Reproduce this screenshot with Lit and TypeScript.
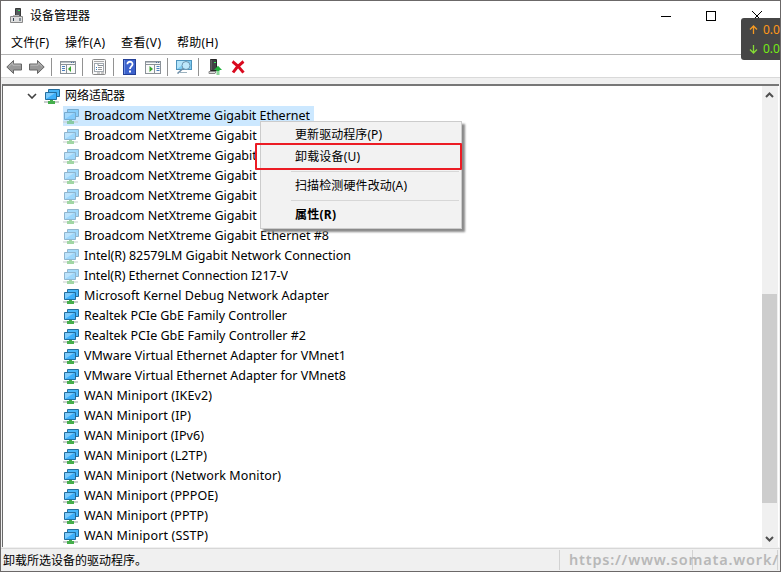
import { LitElement, html, css, svg } from "lit";
import { customElement, property } from "lit/decorators.js";
import { classMap } from "lit/directives/class-map.js";

const panelDots = (x: number) => svg`
  <path d="M${x} 7.5h3M${x} 9.5h3M${x} 11.5h3" stroke="#4a7ebd"/>`;

const consoleFrame = svg`
  <rect x=".5" y="2.5" width="15" height="12" fill="#fafafa" stroke="#8b9299"/>
  <path d="M1 3.5h14" stroke="#b8bfc6"/><path d="M1 5.500h14" stroke="#8b9299"/>
  <path d="M11 3.5h1M13 3.5h1" stroke="#4a6f9c"/>`;

const icons: Record<string, unknown> = {
  back: svg`<path d="M.8 8 7.5 1.500V5H15.500V11H7.500V14.500Z" fill="#999" stroke="#666"/><path d="M3 7.300 6.800 3.800V6.200H14.500" fill="none" stroke="#bbb"/>`,
  forward: svg`<path d="M15.200 8 8.500 1.500V5H.500V11H8.500V14.500Z" fill="#999" stroke="#666"/><path d="M1.500 6.200H9.200V3.800L13 7.300" fill="none" stroke="#bbb"/>`,
  tree: svg`${consoleFrame}${panelDots(2)}<path d="M6.500 6v8" stroke="#8b9299"/><path d="M11 7v6L8 10Z" fill="#38a52c"/>`,
  properties: svg`<rect x="1.5" y=".5" width="13" height="15" rx="1" fill="#f8f8f8" stroke="#888"/><path d="M3 2.5h10" stroke="#aaa"/><rect x="3.5" y="4.5" width="9" height="8" fill="#fff" stroke="#a2a9b0"/><path d="M7 5v1.5h5" fill="none" stroke="#8b9299"/><path d="M5 8.5h1M5 10.5h1" stroke="#347ac0"/><path d="M7 8.5h4M7 10.5h4" stroke="#999"/><path d="M6 14h3M10 14h3" stroke="#999"/>`,
  help: svg`<rect x="1.5" y=".5" width="12" height="15" fill="#3c62cc" stroke="#233f96"/><path d="M2.5 1v14" stroke="#6f92e6"/><path d="M5.4 5.2C5.4 1.8 10.7 2 10.5 5.3C10.3 7.3 8 7.5 8 10" fill="none" stroke="#fff" stroke-width="1.8"/><rect x="7" y="11.5" width="2" height="2" fill="#fff"/>`,
  action: svg`${consoleFrame}${panelDots(11.5)}<path d="M9.500 6v8" stroke="#8b9299"/><path d="M4.500 7v6L8 10Z" fill="#38a52c"/>`,
  scan: svg`<rect x=".5" y="1.500" width="15" height="9" fill="#7fcdf3" stroke="#4e94bd"/><path d="M1 10V2h11Z" fill="#b4e5fb"/><path d="M4 13.500h7" stroke="#9cb2bf"/><circle cx="10" cy="6.500" r="4" fill="#c7ecfd" fill-opacity=".85" stroke="#6c95af"/><path d="m7 9.500-5.500 5" stroke="#6c8da7" stroke-width="1.6"/>`,
  update: svg`<path d="M3.500.500h6v11h-6Z" fill="#3f4244" stroke="#252525"/><path d="M4 1v10" stroke="#777"/><path d="M7 3.500h2" stroke="#36ee58"/><path d="M2 12.500h7l-1 2H2Z" fill="#ddd" stroke="#888"/><path d="M11 6.800 15 11h-2.500v1h-3v-1H7Z" fill="#21b23c"/><path d="M9.500 13h3M9.500 15h3" stroke="#21b23c"/>`,
  remove: svg`<path d="M2.500 2.500C6 5 10.500 9.500 13.500 13.700M13.500 2.500C9.500 5.500 6 9 3 13.500" fill="none" stroke="#d9091e" stroke-width="2.9"/>`,
  computer: svg`<path d="M6.500.500h5v8h-5Z" fill="#555b5e" stroke="#393939"/><path d="M9 2.500h2" stroke="#32e456"/><path d="M1.500 8.500h12v6h-12Z" fill="#ddd" stroke="#898989"/><path d="M4 10h1v3H4ZM10.500 10h1v3h-1Z" fill="#345"/><path d="M4 7.500h6" stroke="#bbb"/>`,
  network: svg`<path d="M0 14h15" stroke="#c9cdce" stroke-width="2"/><path d="M6 12h3v1h2v3H4v-3h2Z" fill="#45ae4c"/><path d="M4.500 1.500h11v7h-11Z" fill="#47b5f8" stroke="#236e9e"/><path d="M1.500 4.500h11v7h-11Z" fill="#3db0fb" stroke="#236e9e"/><path d="M2 11V5h9Z" fill="#7ccbfd"/>`,
};

@customElement("dm-icon")
class DmIcon extends LitElement {
  static styles = css`
    :host { display: block; width: 16px; height: 16px; flex: none; }
    svg { display: block; width: 100%; height: 100%; }
  `;
  @property() name = "";
  render() {
    return html`<svg viewBox="0 0 16 16" fill="none">${icons[this.name]}</svg>`;
  }
}

interface Device { name: string; width: number; off?: boolean; selected?: boolean; }

const devices: Device[] = [
  { name: "Broadcom NetXtreme Gigabit Ethernet", width: 226, off: true, selected: true },
  ...[2, 3, 4, 5, 6, 8].map((n) => ({ name: `Broadcom NetXtreme Gigabit Ethernet #${n}`, width: 245, off: true })),
  { name: "Intel(R) 82579LM Gigabit Network Connection", width: 267, off: true },
  { name: "Intel(R) Ethernet Connection I217-V", width: 204, off: true },
  { name: "Microsoft Kernel Debug Network Adapter", width: 245 },
  { name: "Realtek PCIe GbE Family Controller", width: 203 },
  { name: "Realtek PCIe GbE Family Controller #2", width: 222 },
  { name: "VMware Virtual Ethernet Adapter for VMnet1", width: 262 },
  { name: "VMware Virtual Ethernet Adapter for VMnet8", width: 262 },
  { name: "WAN Miniport (IKEv2)", width: 128 },
  { name: "WAN Miniport (IP)", width: 107 },
  { name: "WAN Miniport (IPv6)", width: 120 },
  { name: "WAN Miniport (L2TP)", width: 123 },
  { name: "WAN Miniport (Network Monitor)", width: 197 },
  { name: "WAN Miniport (PPPOE)", width: 134 },
  { name: "WAN Miniport (PPTP)", width: 124 },
  { name: "WAN Miniport (SSTP)", width: 124 },
];

@customElement("app-root")
class AppRoot extends LitElement {
  static styles = css`
    :host {
      display: flex; flex-direction: column; position: relative; box-sizing: border-box;
      width: 781px; height: 572px; overflow: hidden; background: #f0f0f0;
      border: 1px solid #6b6868; color: #000;
      font: 12px/20px "Noto Sans", "Noto Sans CJK SC", sans-serif;
    }
    .title { display: flex; align-items: center; height: 29px; padding-left: 8px; background: #fff; flex: none; }
    .title span { margin-left: 5px; flex: 1; }
    .controls { display: block; width: 104px; height: 20px; margin-right: 16px; }
    .menu { display: flex; height: 24px; padding-left: 10px; background: #fff; border-bottom: 1px solid #b4b4b4; flex: none; }
    .menu svg { display: block; height: 24px; margin-right: 16px; overflow: visible; }
    .tools { display: flex; align-items: center; height: 20px; padding: 2px 0 0 5px; background: #fff; border-bottom: 1px solid #d9d9d9; flex: none; }
    .gap { width: 7px; }
    .sep { width: 1px; height: 18px; margin: 0 8px 0 6px; background: #929292; }
    .gapless { margin-left: 7px; }
    .client { display: flex; height: 461px; margin: 6px 1px 0; border: solid #696969; border-width: 2px 0 0 1px; border-top-color: #777; background: #fff; flex: none; }
    .tree { flex: 1; min-width: 0; }
    .root, .row { display: flex; align-items: center; height: 20px; }
    .root { padding-left: 23px; }
    .chevron { width: 10px; height: 6px; margin: 0 7px 0 1px; }
    .root span { margin-left: 5px; }
    .row { padding-left: 60px; font-size: 12.5px; }
    .off dm-icon { opacity: .5; }
    .name { display: block; height: 20px; padding: 0 4px 0 5px; }
    .item { display: flex; align-items: center; height: 20px; }
    .selected .item { background: #cce8ff; }
    .scroll { width: 16px; display: flex; flex-direction: column; background: #f0f0f0; border-right: 1px solid #fff; }
    .scroll svg { display: block; width: 15px; height: 16px; flex: none; }
    .before { height: 192px; }
    .thumb { height: 209px; width: 15px; background: #cdcdcd; }
    .after { flex: 1; }
    .status { display: flex; align-items: center; height: 22px; border-top: 1px solid #d7d7d7; margin-top: 1px; padding-left: 2px; flex: none; }
    .status span { flex: 1; padding-top: 1px; }
    .panes { display: flex; width: 220px; height: 20px; border-left: 1px solid #d2d2d2; position: relative; }
    .pane { width: 132px; border-right: 1px solid #d2d2d2; }
    .pane + .pane { width: 84px; }
    .mark { position: absolute; left: 0; top: 0; width: 219px; height: 20px; }
    .context { position: absolute; left: 259px; top: 120px; width: 202px; height: 108px; box-sizing: border-box; border: 1px solid #ccc; background: #f2f2f2; box-shadow: 3px 3px 2px #8a8a8a; padding: 2px 2px 0; display: flex; flex-direction: column; }
    .option { height: 22px; line-height: 22px; padding-left: 32px; flex: none; }
    .option svg { display: block; height: 22px; width: 160px; overflow: visible; }
    .context hr { width: 168px; height: 1px; border: 0; background: #d7d7d7; margin: 3px 0 3px 28px; flex: none; }
    .strong { font-weight: 700; }
    .highlight { position: absolute; left: 254px; top: 142px; width: 207px; height: 27px; box-sizing: border-box; border: 2px solid #ec1c24; border-radius: 1px; }
    .speed { position: absolute; left: 740px; top: 17px; width: 39px; height: 42px; border-radius: 3px 0 0 3px; background: #464646; overflow: hidden; }
    .speed svg { display: block; }
  `;

  private label(text: string, width: number, baseline = 16) {
    return svg`<text x="0" y=${baseline} textLength=${width} lengthAdjust="spacing">${text}</text>`;
  }

  private option(text: string, width: number, strong = false) {
    return html`<div class=${classMap({ option: true, strong })}><svg>${this.label(text, width, 15)}</svg></div>`;
  }

  render() {
    const menus: [string, number][] = [["文件(F)", 38], ["操作(A)", 40], ["查看(V)", 40], ["帮助(H)", 41]];
    const sep = html`<i class="sep"></i>`;
    return html`
      <div class="title">
        <dm-icon name="computer"></dm-icon><span>设备管理器</span>
        <svg class="controls" viewBox="0 0 104 20" fill="none" stroke="#000">
          <path d="M1 10.5h10M46.5 5.5h9v9h-9Z" shape-rendering="crispEdges"/><path d="m92 5 10 10M102 5 92 15"/>
        </svg>
      </div>
      <div class="menu">${menus.map(([t, w]) => html`<svg width=${w}>${this.label(t, w, 17)}</svg>`)}</div>
      <div class="tools">
        <dm-icon name="back"></dm-icon><i class="gap"></i><dm-icon name="forward"></dm-icon>${sep}
        <dm-icon name="tree"></dm-icon>${sep}<dm-icon name="properties"></dm-icon>${sep}
        <dm-icon name="help"></dm-icon><i class="gap"></i><dm-icon name="action"></dm-icon>${sep}
        <dm-icon name="scan"></dm-icon>${sep}<dm-icon name="update"></dm-icon>
        <dm-icon class="gapless" name="remove"></dm-icon>
      </div>
      <div class="client">
        <div class="tree">
          <div class="root">
            <svg class="chevron" viewBox="0 0 10 6"><path d="m1 1 4 4 4-4" fill="none" stroke="#404040" stroke-width="1.6"/></svg>
            <dm-icon name="network"></dm-icon><span>网络适配器</span>
          </div>
          ${devices.map((d) => html`
            <div class=${classMap({ row: true, off: !!d.off, selected: !!d.selected })}>
              <div class="item"><dm-icon name="network"></dm-icon>
                <svg class="name" width=${d.width}>${this.label(d.name, d.width, 14)}</svg></div>
            </div>`)}
        </div>
        <div class="scroll">
          <svg viewBox="0 0 15 16"><path d="m4 11 3.500-3.500L11 11" fill="none" stroke="#505050" stroke-width="2"/></svg>
          <div class="before"></div><div class="thumb"></div><div class="after"></div>
          <svg viewBox="0 0 15 16"><path d="m4 6 3.500 3.500L11 6" fill="none" stroke="#505050" stroke-width="2"/></svg>
        </div>
      </div>
      <div class="status"><span>卸载所选设备的驱动程序。</span>
        <div class="panes"><div class="pane"></div><div class="pane"></div>
          <svg class="mark"><text x="9" y="15" textLength="209" font-size="14.5" font-weight="600" fill="#b8b8b8">https://www.somata.work/</text></svg>
        </div>
      </div>
      <div class="context">
        ${this.option("更新驱动程序(P)", 87)}${this.option("卸载设备(U)", 65)}<hr />
        ${this.option("扫描检测硬件改动(A)", 112)}<hr />${this.option("属性(R)", 41, true)}
      </div>
      <div class="highlight"></div>
      <div class="speed">
        <svg width="45" height="42" font-size="12">
          <path d="M12.500 16V8M9 11.500 12.500 8l3.500 3.500" fill="none" stroke="#f59a23" stroke-width="1.3"/>
          <path d="M12.500 27v8M9 31.500l3.500 3.500 3.500-3.500" fill="none" stroke="#85dc35" stroke-width="1.3"/>
          <text x="22" y="16" fill="#ff9818">0.0</text><text x="22" y="35" fill="#75ec15">0.0</text>
        </svg>
      </div>`;
  }
}
